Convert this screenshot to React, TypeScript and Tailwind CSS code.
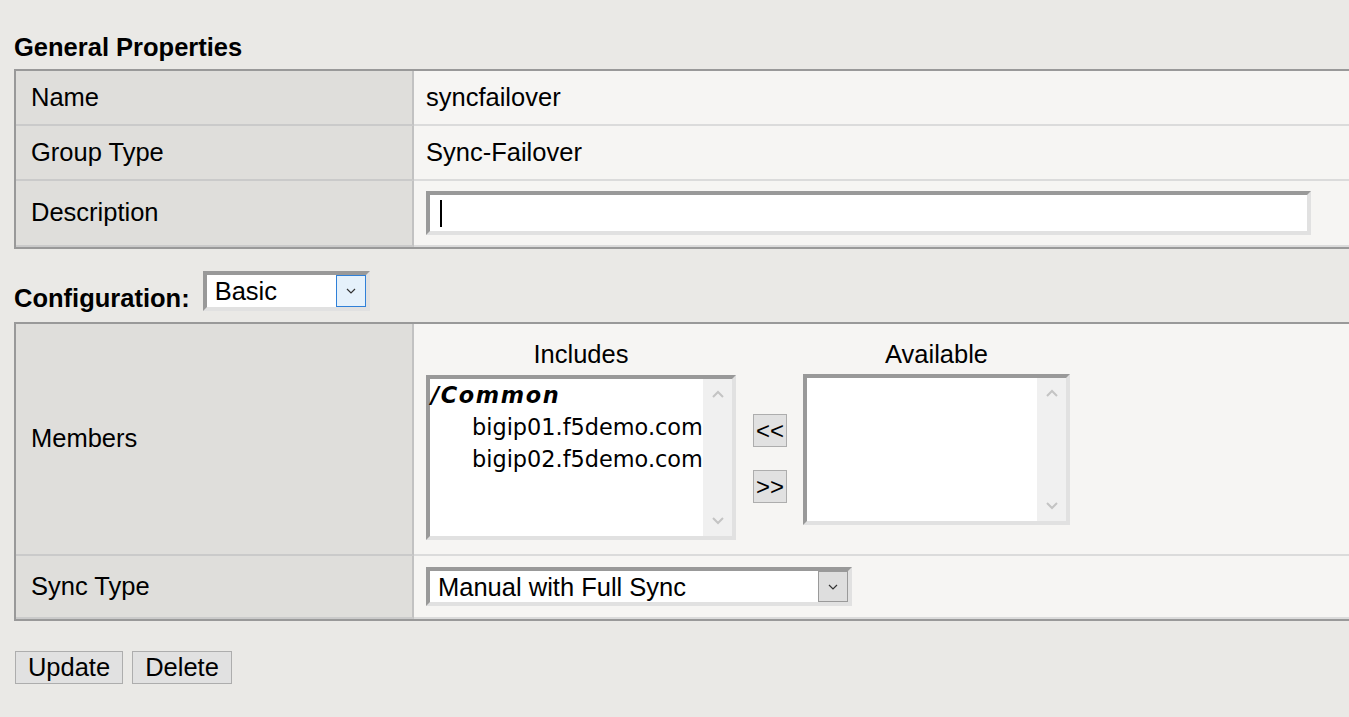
import React from "react";

const Up = () => (
  <svg width="12" height="8" viewBox="0 0 12 8" className="block">
    <path d="M1 7 L6 2 L11 7" fill="none" stroke="#c4c4c4" strokeWidth="2" />
  </svg>
);
const Down = () => (
  <svg width="12" height="8" viewBox="0 0 12 8" className="block">
    <path d="M1 1 L6 6 L11 1" fill="none" stroke="#c4c4c4" strokeWidth="2" />
  </svg>
);
const Chev = () => (
  <svg width="10" height="6" viewBox="0 0 10 6" className="block">
    <path d="M1 1 L5 5 L9 1" fill="none" stroke="#333" strokeWidth="1.2" />
  </svg>
);

function Row({
  label,
  h,
  children,
}: {
  label: string;
  h: string;
  children: React.ReactNode;
}) {
  return (
    <div className={`flex ${h}`}>
      <div className="w-[398px] shrink-0 bg-[#dfdedb] border-r-2 border-r-[#c2c2c2] border-b-2 border-b-[#cacaca] pl-[15px] flex items-center">
        {label}
      </div>
      <div className="flex-1 bg-[#f6f5f3] border-b-2 border-b-[#dbdbdb] pl-[12px] flex items-center">
        {children}
      </div>
    </div>
  );
}

export default function App() {
  return (
    <div className="w-[1349px] h-[717px] overflow-hidden bg-[#eae9e6] text-black font-['Liberation_Sans',Arial,sans-serif] text-[25.5px] leading-none">
      <div className="pl-[14px] pt-[32px]">
        <div className="font-bold leading-[30px] h-[30px]">General Properties</div>

        <div className="mt-[7px] border-t-2 border-l-2 border-b-2 border-[#999]">
          <Row label="Name" h="h-[55px]">
            syncfailover
          </Row>
          <Row label="Group Type" h="h-[55px]">
            Sync-Failover
          </Row>
          <Row label="Description" h="h-[66px]">
            <div className="w-[885px] h-[44px] border-4 border-t-[#999] border-l-[#999] border-b-[#e1e1e1] border-r-[#e1e1e1] bg-white flex items-center pl-[10px]">
              <div className="w-[2px] h-[27px] bg-black" />
            </div>
          </Row>
        </div>

        <div className="mt-[22px] flex items-start h-[40px]">
          <div className="font-bold leading-[30px] h-[30px] mt-[12px]">Configuration:</div>
          <div className="ml-[13px] w-[167px] h-[40px] border-4 border-t-[#999] border-l-[#999] border-b-[#e1e1e1] border-r-[#e1e1e1] bg-white flex">
            <div className="flex-1 pl-[8px] pt-[2px] flex items-center">Basic</div>
            <div className="w-[30px] border border-[#2f80d8] bg-[#e5f1fb] flex items-center justify-center">
              <Chev />
            </div>
          </div>
        </div>

        <div className="mt-[11px] border-t-2 border-l-2 border-b-2 border-[#999]">
          <div className="flex h-[232px]">
            <div className="w-[398px] shrink-0 bg-[#dfdedb] border-r-2 border-r-[#c2c2c2] border-b-2 border-b-[#cacaca] pl-[15px] flex items-center">
              Members
            </div>
            <div className="flex-1 bg-[#f6f5f3] border-b-2 border-b-[#dbdbdb] pl-[12px] pt-[15px] flex items-start">
              <div className="w-[310px] flex flex-col">
                <div className="h-[30px] leading-[30px] text-center">Includes</div>
                <div className="mt-[6px] h-[165px] border-4 border-t-[#999] border-l-[#999] border-b-[#e1e1e1] border-r-[#e1e1e1] bg-white flex">
                  <div className="flex-1 pl-[1px] font-['DejaVu_Sans',sans-serif] text-[22.4px]">
                    <div className="h-[32px] leading-[32px] font-bold italic tracking-[1.6px]">/Common</div>
                    <div className="h-[32px] leading-[32px] pl-[41px]">bigip01.f5demo.com</div>
                    <div className="h-[32px] leading-[32px] pl-[41px]">bigip02.f5demo.com</div>
                  </div>
                  <div className="w-[29px] bg-[#f0f0f0] flex flex-col items-center justify-between py-[11px]">
                    <Up />
                    <Down />
                  </div>
                </div>
              </div>
              <div className="ml-[17px] mt-[75px] flex flex-col gap-[23px]">
                <div className="w-[34px] h-[33px] bg-[#e1e1e1] border border-[#adadad] flex items-center justify-center text-[24px]">
                  &lt;&lt;
                </div>
                <div className="w-[34px] h-[33px] bg-[#e1e1e1] border border-[#adadad] flex items-center justify-center text-[24px]">
                  &gt;&gt;
                </div>
              </div>
              <div className="ml-[16px] w-[267px] flex flex-col">
                <div className="h-[30px] leading-[30px] text-center">Available</div>
                <div className="mt-[5px] h-[151px] border-4 border-t-[#999] border-l-[#999] border-b-[#e1e1e1] border-r-[#e1e1e1] bg-white flex">
                  <div className="flex-1" />
                  <div className="w-[29px] bg-[#f0f0f0] flex flex-col items-center justify-between py-[11px]">
                    <Up />
                    <Down />
                  </div>
                </div>
              </div>
            </div>
          </div>
          <Row label="Sync Type" h="h-[63px]">
            <div className="w-[426px] h-[39px] border-4 border-t-[#999] border-l-[#999] border-b-[#e1e1e1] border-r-[#e1e1e1] bg-white flex">
              <div className="flex-1 pl-[8px] pt-[2px] flex items-center">Manual with Full Sync</div>
              <div className="w-[30px] border border-[#9a9a9a] bg-[#dedede] flex items-center justify-center">
                <Chev />
              </div>
            </div>
          </Row>
        </div>

        <div className="mt-[30px] ml-[1px] flex gap-[9px]">
          <div className="w-[108px] h-[33px] bg-[#e1e1e1] border border-[#adadad] flex items-center justify-center">
            Update
          </div>
          <div className="w-[100px] h-[33px] bg-[#e1e1e1] border border-[#adadad] flex items-center justify-center">
            Delete
          </div>
        </div>
      </div>
    </div>
  );
}
